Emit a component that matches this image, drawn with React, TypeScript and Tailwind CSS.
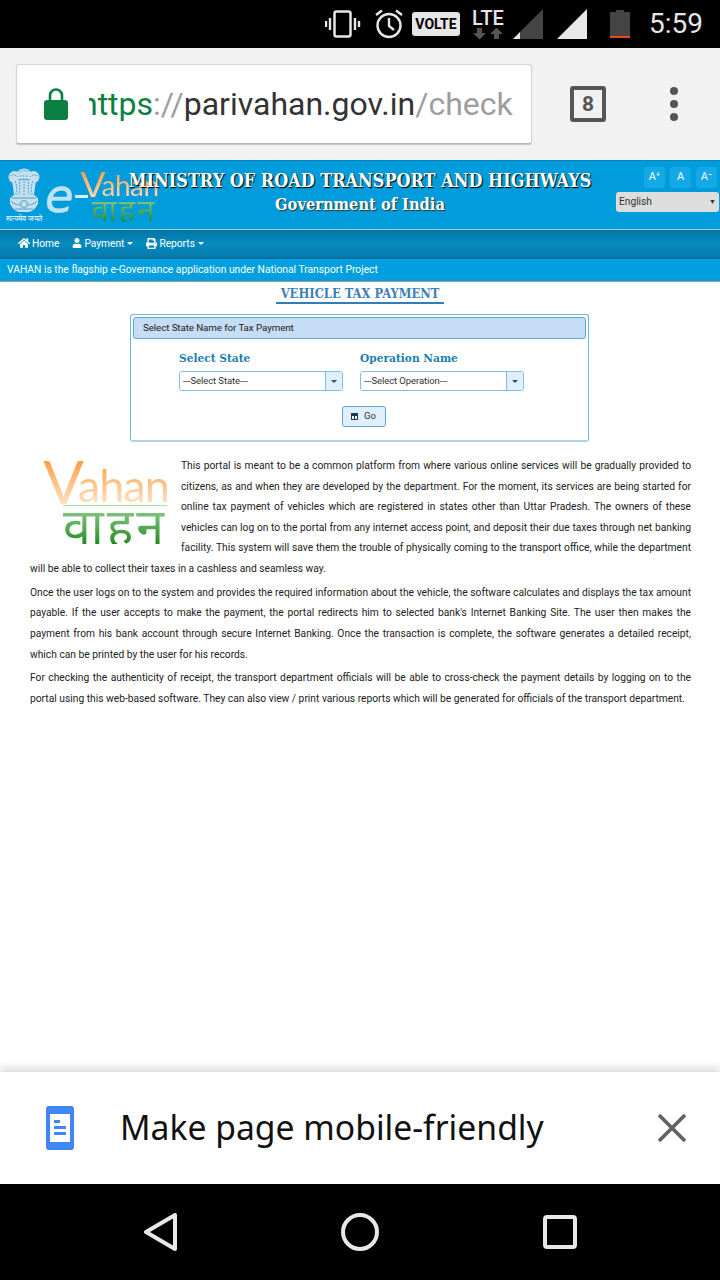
import { FaHome, FaUser, FaPrint } from "react-icons/fa";

const ROBOTO = "font-['Roboto',sans-serif]";
const SERIF = "font-['DejaVu_Serif_Condensed','DejaVu_Serif',serif] [font-stretch:condensed]";

const StatusBar = () => (
  <div className="h-12 bg-black flex items-center justify-end shrink-0 text-[#e6e6e6]">
    <svg width="36" height="28" viewBox="0 0 36 28" fill="none" stroke="#e6e6e6" className="mr-[13px]">
      <rect x="9.5" y="1.5" width="16" height="25" rx="2" strokeWidth="2.5" />
      <path d="M5 8v12M1 11v6M30 8v12M34 11v6" strokeWidth="2.4" />
    </svg>
    <svg width="30" height="30" viewBox="0 0 30 30" fill="none" stroke="#e6e6e6" className="mr-[8px]">
      <circle cx="15" cy="16.5" r="11.5" strokeWidth="2.4" />
      <path d="M15 9v8l5 4M2 6l6-4.500M28 6l-6-4.500" strokeWidth="2.4" />
    </svg>
    <div className={`w-[48px] h-6 bg-[#e6e6e6] rounded-[3px] text-black text-[14px] font-bold flex items-center justify-center mr-[10px] ${ROBOTO}`}>
      VOLTE
    </div>
    <div className="w-[36px] h-[32px] flex flex-col items-center mr-[7px]">
      <span className={`text-[20px] leading-[20px] font-medium ${ROBOTO}`}>LTE</span>
      <svg width="30" height="12" viewBox="0 0 30 12" fill="#555">
        <path d="M4 0h5v5h4l-6.500 6.500L0 5h4zM21 11h5V6h4l-6.500-6.500L17 6h4z" />
      </svg>
    </div>
    <svg width="30" height="30" viewBox="0 0 30 30" className="mr-[14px]">
      <path d="M0 30 30 0v30z" fill="#444" />
      <path d="M0 30 7 23v7z" fill="#e6e6e6" />
    </svg>
    <svg width="30" height="30" viewBox="0 0 30 30" className="mr-[23px]">
      <path d="M0 30 30 0v30z" fill="#e8e8e8" />
    </svg>
    <div className="w-5 h-[28px] flex flex-col items-center mr-[19px]">
      <div className="w-2 h-[2px] bg-[#444]" />
      <div className="w-5 flex-1 bg-[#444] border-b-[2px] border-[#e64a19]" />
    </div>
    <span className={`text-[28px] leading-none mr-[17px] ${ROBOTO}`}>5:59</span>
  </div>
);

const Toolbar = () => (
  <div className="h-28 bg-[#f2f2f2] flex items-center shrink-0 pl-4">
    <div className="w-[516px] h-[80px] bg-white rounded-[3px] border border-[#d4d4d4] border-b-[#b8b8b8] shadow-[0_1px_1px_rgba(0,0,0,0.2)] flex items-center pl-[27px]">
      <svg width="24" height="32" viewBox="0 0 24 32" fill="#0b8043" className="shrink-0">
        <path d="M3 12h18a3 3 0 0 1 3 3v14a3 3 0 0 1-3 3H3a3 3 0 0 1-3-3V15a3 3 0 0 1 3-3z" />
        <path d="M6 13V7.500a6 6 0 0 1 12 0V13" fill="none" stroke="#0b8043" strokeWidth="2.6" />
      </svg>
      <div className={`ml-[21px] w-[426px] overflow-hidden whitespace-nowrap text-[32px] leading-[40px] ${ROBOTO}`}>
        <div className="-ml-[9px]">
          <span className="text-[#0b8043]">https</span>
          <span className="text-[#9e9e9e]">://</span>
          <span className="text-[#333]">parivahan.gov.in</span>
          <span className="text-[#9e9e9e]">/check</span>
        </div>
      </div>
    </div>
    <div className="ml-[38px] w-[36px] h-[36px] border-[4px] border-[#555] rounded-[3px] flex items-center justify-center">
      <span className={`text-[21px] font-bold text-[#555] leading-none ${ROBOTO}`}>8</span>
    </div>
    <div className="ml-[64px] flex flex-col gap-[5px]">
      <div className="w-2 h-2 rounded-full bg-[#555]" />
      <div className="w-2 h-2 rounded-full bg-[#555]" />
      <div className="w-2 h-2 rounded-full bg-[#555]" />
    </div>
  </div>
);

const Emblem = () => (
  <svg width="34" height="46" viewBox="0 0 34 46" className="block">
    <g fill="#c4dfee">
      <ellipse cx="17" cy="6" rx="7" ry="5.500" />
      <ellipse cx="7.500" cy="9" rx="6" ry="6" />
      <ellipse cx="26.500" cy="9" rx="6" ry="6" />
      <path d="M5 12h24l-2 15c2 1 3 2 3 3H4c0-1 1-2 3-3z" />
      <path d="M3 30h28v6c-2 4-5 7-9 8H12c-4-1-7-4-9-8z" />
    </g>
    <g fill="none" stroke="#3f93bf" strokeWidth="0.8">
      <path d="M8 13c2 4 2 9 1 14M12 11c1 5 1 11 0 16M17 10v17M22 11c-1 5-1 11 0 16M26 13c-2 4-2 9-1 14" strokeDasharray="2 1" />
      <path d="M3 8c3-2 6-1 8 1M31 8c-3-2-6-1-8 1M12 4c3-2 7-2 10 0M13 8h8" strokeDasharray="1.500 1" />
      <circle cx="17" cy="36" r="3.500" />
      <path d="M4 33c3 3 6 4 9 4M30 33c-3 3-6 4-9 4M8 41h18M5 30h24" />
    </g>
  </svg>
);

const VahanLogo = ({ big }: { big?: boolean }) =>
  big ? (
    <div className="w-[124px] h-[86px] flex flex-col items-center">
      <div className="h-[47px] flex items-end font-['Lato',sans-serif] leading-none bg-gradient-to-b from-[#ff9a30] to-[#ffe2c4] bg-clip-text text-transparent">
        <span className="text-[60px] leading-[47px]">V</span>
        <span className="text-[45px] leading-[40px] tracking-[-1px] -ml-[6px]">ahan</span>
      </div>
      <span className="w-[104px] ml-[18px] h-px bg-[#a6dca6]" />
      <span className="ml-[18px] text-[50px] leading-[38px] tracking-[3px] font-['Open_Sans','Noto_Sans',sans-serif] bg-gradient-to-b from-[#8fd08f] to-[#1e8c1e] bg-clip-text text-transparent">
        वाहन
      </span>
    </div>
  ) : (
    <div className="w-[75px] h-[52px] flex flex-col items-center">
      <div className="h-[27px] flex items-end font-['Lato',sans-serif] leading-none bg-gradient-to-b from-[#ff9a30] to-[#ffd9b0] bg-clip-text text-transparent">
        <span className="text-[37px] leading-[27px]">V</span>
        <span className="text-[28px] leading-[24px] tracking-[-0.5px] -ml-[4px]">ahan</span>
      </div>
      <span className="ml-[9px] text-[31px] leading-[25px] tracking-[2px] font-['Open_Sans','Noto_Sans',sans-serif] bg-gradient-to-b from-[#8fd08f] to-[#1e8c1e] bg-clip-text text-transparent">
        वाहन
      </span>
    </div>
  );

const FontButton = ({ label }: { label: string }) => (
  <div className="w-[21px] h-[21px] rounded-[3px] bg-[#12a9e6] text-white text-[11px] flex items-center justify-center">
    {label}
  </div>
);

const Caret = () => <span className="ml-[1px] border-x-[3px] border-x-transparent border-t-[3px] border-t-white" />;

const Header = () => (
  <div className={`shrink-0 ${ROBOTO}`}>
    <div className="relative h-[70px] bg-[#019cdc] border-t border-[#0a85ba] border-b border-b-[#9fd0e6]">
      <div className="absolute left-[3px] top-[7px] w-[42px] flex flex-col items-center">
        <Emblem />
        <span className="text-[7.500px] leading-[9px] text-white whitespace-nowrap">सत्यमेव जयते</span>
      </div>
      <span className="absolute left-[45px] top-[10px] text-[46px] leading-[50px] italic text-[#bfe2f4] [-webkit-text-stroke:0.7px_#bfe2f4] font-['DejaVu_Sans',sans-serif]">
        e
      </span>
      <span className="absolute left-[75px] top-[34px] w-[13px] h-[3px] bg-[#d8eef8]" />
      <div className="absolute left-[82px] top-[9px]">
        <VahanLogo />
      </div>
      <div className={`relative flex flex-col items-center pt-[7px] text-white font-bold [text-shadow:1px_1px_1px_#000] ${SERIF}`}>
        <span className="text-[17.900px] leading-[26px]">MINISTRY OF ROAD TRANSPORT AND HIGHWAYS</span>
        <span className="text-[16.300px] leading-[21px] [text-shadow:1px_1px_1px_#333]">Government of India</span>
      </div>
      <div className="absolute right-[3px] top-[6px] flex gap-[5px]">
        <FontButton label="A⁺" />
        <FontButton label="A" />
        <FontButton label="A⁻" />
      </div>
      <div className="absolute right-[1px] top-[31px] w-[103px] h-[20px] bg-[#ddd] rounded-[3px] flex items-center justify-between pl-[3px] pr-[3px] text-[10.200px] text-[#333]">
        <span>English</span>
        <span className="text-[7px]">▼</span>
      </div>
    </div>
    <div className="h-[29px] bg-gradient-to-b from-[#0773a3] via-[#058bc0] to-[#057aab] border-b-2 border-[#05719f] flex items-center pl-[18px] gap-[13px] text-white text-[10.200px]">
      <div className="flex items-center gap-[2px]">
        <FaHome size={12} />
        <span>Home</span>
      </div>
      <div className="flex items-center gap-[2px]">
        <FaUser size={10} />
        <span>Payment</span>
        <Caret />
      </div>
      <div className="flex items-center gap-[2px]">
        <FaPrint size={11} />
        <span>Reports</span>
        <Caret />
      </div>
    </div>
    <div className="h-[23px] bg-[#00a0e0] border-b border-[#9a9a9a] flex items-center pl-[7px] pb-[1px] text-white text-[10.300px]">
      VAHAN is the flagship e-Governance application under National Transport Project
    </div>
  </div>
);

const SelectBox = ({ label, value }: { label: string; value: string }) => (
  <div className="w-[164px]">
    <div className={`text-[11.800px] leading-[18px] font-bold text-[#1a7fb0] ${SERIF}`}>{label}</div>
    <div className="mt-[4px] h-[20px] flex border border-[#7fc0e2] rounded-[3px] overflow-hidden">
      <div className="flex-1 bg-white pl-[3px] text-[9.500px] tracking-[-0.1px] leading-[17px] text-[#333]">{value}</div>
      <div className="w-[17px] bg-[#dfeffc] border-l border-[#7fc0e2] flex items-center justify-center">
        <span className="border-x-[3px] border-x-transparent border-t-[3px] border-t-[#2e4e68]" />
      </div>
    </div>
  </div>
);

const TaxForm = () => (
  <div className={`w-[459px] h-[128px] ml-[130px] mt-[10px] border border-[#6fb7dc] rounded-[3px] p-[2px] border-b-2 border-b-[#add4e6] ${ROBOTO}`}>
    <div className="h-[22px] bg-[#c5ddf5] border border-[#5ea7d3] rounded-[3px] pl-[9px] text-[9.800px] tracking-[-0.1px] leading-[20px] text-[#222]">
      Select State Name for Tax Payment
    </div>
    <div className="mt-[10px] flex gap-[17px] pl-[46px]">
      <SelectBox label="Select State" value="---Select State---" />
      <SelectBox label="Operation Name" value="---Select Operation---" />
    </div>
    <div className="mt-[15px] flex justify-center pl-[8px]">
      <div className="w-[44px] h-[21px] bg-[#dfeffc] border border-[#5ea7d3] rounded-[3px] flex items-center justify-center gap-[6px] text-[9.500px] text-[#333]">
        <svg width="7" height="7" viewBox="0 0 7 7" fill="#1d3a50">
          <path d="M0 0h7v7H0zM1 3v3h2V3zm3 0v3h2V3z" fillRule="evenodd" />
        </svg>
        <span>Go</span>
      </div>
    </div>
  </div>
);

const Description = () => (
  <div className={`mt-[14px] ml-[30px] mr-[29px] text-[10.250px] text-[#222] text-justify ${ROBOTO}`}>
    <div className="leading-[20.600px]">
      <div className="float-left w-[151px] h-[93px] pl-[14px] pt-[2px]">
        <VahanLogo big />
      </div>
      This portal is meant to be a common platform from where various online services will be gradually provided to
      citizens, as and when they are developed by the department. For the moment, its services are being started for
      online tax payment of vehicles which are registered in states other than Uttar Pradesh. The owners of these
      vehicles can log on to the portal from any internet access point, and deposit their due taxes through net banking
      facility. This system will save them the trouble of physically coming to the transport office, while the department
      will be able to collect their taxes in a cashless and seamless way.
    </div>
    <p className="mt-[3px] leading-[20.700px]">
      Once the user logs on to the system and provides the required information about the vehicle, the software calculates
      and displays the tax amount payable. If the user accepts to make the payment, the portal redirects him to selected
      bank's Internet Banking Site. The user then makes the payment from his bank account through secure Internet Banking.
      Once the transaction is complete, the software generates a detailed receipt, which can be printed by the user for
      his records.
    </p>
    <p className="mt-[3px] leading-[20.700px]">
      For checking the authenticity of receipt, the transport department officials will be able to cross-check the payment
      details by logging on to the portal using this web-based software. They can also view / print various reports which
      will be generated for officials of the transport department.
    </p>
  </div>
);

const InfoBar = () => (
  <div className="h-28 bg-white shadow-[0_-3px_10px_rgba(0,0,0,0.18)] flex items-center shrink-0 pl-[46px] relative">
    <svg width="28" height="44" viewBox="0 0 28 44" className="shrink-0">
      <rect width="28" height="44" rx="3" fill="#4285f4" />
      <rect x="4" y="8" width="20" height="28" fill="#fff" />
      <path d="M8 14h6v3H8zM8 20h12v3H8zM8 26h12v3H8z" fill="#4285f4" />
    </svg>
    <span className="ml-[46px] text-[33.700px] leading-none text-[#111] font-['Noto_Sans',sans-serif] whitespace-nowrap">
      Make page mobile-friendly
    </span>
    <svg width="28" height="28" viewBox="0 0 28 28" className="ml-auto mr-[34px]" stroke="#616161" strokeWidth="3.6">
      <path d="M1 1l26 26M27 1 1 27" />
    </svg>
  </div>
);

const NavBar = () => (
  <div className="h-24 bg-black flex items-center shrink-0 pl-[144px] relative">
    <svg width="34" height="38" viewBox="0 0 34 38" fill="none" stroke="#e8e8e8" strokeWidth="4" strokeLinejoin="round">
      <path d="M31 2v34L2 19z" />
    </svg>
    <svg width="38" height="38" viewBox="0 0 38 38" fill="none" stroke="#e8e8e8" strokeWidth="4" className="ml-[163px]">
      <circle cx="19" cy="19" r="17" />
    </svg>
    <svg width="34" height="34" viewBox="0 0 34 34" fill="none" stroke="#e8e8e8" strokeWidth="4" className="ml-[164px]">
      <rect x="2" y="2" width="30" height="30" rx="2" />
    </svg>
  </div>
);

export default function App() {
  return (
    <div className="w-[720px] h-[1280px] bg-white flex flex-col overflow-hidden">
      <StatusBar />
      <Toolbar />
      <Header />
      <div className="flex-1 min-h-0">
        <div className={`w-[168px] ml-[276px] mt-[3px] border-b-2 border-[#2e7fb5] text-center text-[12.800px] leading-[17px] font-bold text-[#3a7fb8] whitespace-nowrap ${SERIF}`}>
          VEHICLE TAX PAYMENT
        </div>
        <TaxForm />
        <Description />
      </div>
      <InfoBar />
      <NavBar />
    </div>
  );
}
